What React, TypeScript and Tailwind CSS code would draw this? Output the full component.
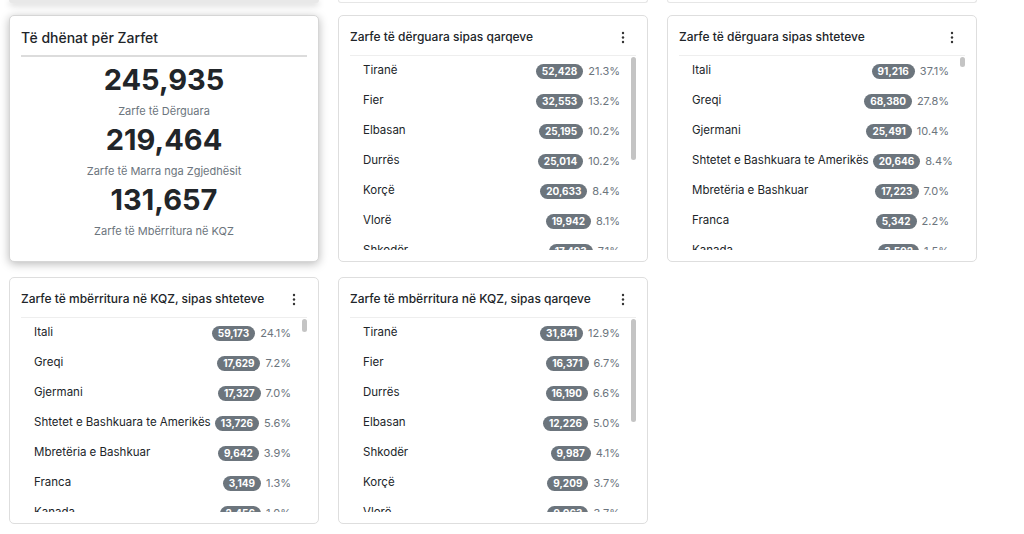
import React from "react";

type Row = { name: string; count: string; pct: string };

const qarqeDerguara: Row[] = [
  { name: "Tiranë", count: "52,428", pct: "21.3%" },
  { name: "Fier", count: "32,553", pct: "13.2%" },
  { name: "Elbasan", count: "25,195", pct: "10.2%" },
  { name: "Durrës", count: "25,014", pct: "10.2%" },
  { name: "Korçë", count: "20,633", pct: "8.4%" },
  { name: "Vlorë", count: "19,942", pct: "8.1%" },
  { name: "Shkodër", count: "17,493", pct: "7.1%" },
  { name: "Berat", count: "14,210", pct: "5.8%" },
];

const shtetDerguara: Row[] = [
  { name: "Itali", count: "91,216", pct: "37.1%" },
  { name: "Greqi", count: "68,380", pct: "27.8%" },
  { name: "Gjermani", count: "25,491", pct: "10.4%" },
  { name: "Shtetet e Bashkuara te Amerikës", count: "20,646", pct: "8.4%" },
  { name: "Mbretëria e Bashkuar", count: "17,223", pct: "7.0%" },
  { name: "Franca", count: "5,342", pct: "2.2%" },
  { name: "Kanada", count: "3,592", pct: "1.5%" },
  { name: "Belgjika", count: "2,104", pct: "0.9%" },
];

const shtetKqz: Row[] = [
  { name: "Itali", count: "59,173", pct: "24.1%" },
  { name: "Greqi", count: "17,629", pct: "7.2%" },
  { name: "Gjermani", count: "17,327", pct: "7.0%" },
  { name: "Shtetet e Bashkuara te Amerikës", count: "13,726", pct: "5.6%" },
  { name: "Mbretëria e Bashkuar", count: "9,642", pct: "3.9%" },
  { name: "Franca", count: "3,149", pct: "1.3%" },
  { name: "Kanada", count: "2,456", pct: "1.0%" },
  { name: "Belgjika", count: "1,402", pct: "0.6%" },
];

const qarqeKqz: Row[] = [
  { name: "Tiranë", count: "31,841", pct: "12.9%" },
  { name: "Fier", count: "16,371", pct: "6.7%" },
  { name: "Durrës", count: "16,190", pct: "6.6%" },
  { name: "Elbasan", count: "12,226", pct: "5.0%" },
  { name: "Shkodër", count: "9,987", pct: "4.1%" },
  { name: "Korçë", count: "9,209", pct: "3.7%" },
  { name: "Vlorë", count: "9,063", pct: "3.7%" },
  { name: "Berat", count: "7,118", pct: "2.9%" },
];

function Kebab() {
  return (
    <svg width="4" height="13" viewBox="0 0 4 13" className="text-[#333]">
      <circle cx="2" cy="2" r="1.2" fill="currentColor" />
      <circle cx="2" cy="6.5" r="1.2" fill="currentColor" />
      <circle cx="2" cy="11" r="1.2" fill="currentColor" />
    </svg>
  );
}

function ListCard({ title, rows, thumb }: { title: string; rows: Row[]; thumb: number }) {
  return (
    <div className="w-[310px] h-[247px] bg-white border border-[#dedede] rounded-[5px] px-[11px] pt-[11px] flex flex-col">
      <div className="flex items-center justify-between h-[20px] pr-[11px]">
        <span className="text-[12px] font-medium text-[#212529] whitespace-nowrap">{title}</span>
        <Kebab />
      </div>
      <div className="mt-[8px] border-t border-[#eeeeee]" />
      <div className="flex h-[194px]">
        <div className="flex-1 overflow-hidden">
          {rows.map((r) => (
            <div key={r.name} className="h-[30px] flex items-center pl-[13px] pr-[11px]">
              <span className="flex-1 text-[11.5px] text-[#212529] whitespace-nowrap">{r.name}</span>
              <span className="ml-[4px] bg-[#6c757d] text-white text-[10px] font-bold rounded-full px-[6px] h-[15px] leading-[15px]">
                {r.count}
              </span>
              <span className="ml-[5px] text-[11px] text-[#6c757d]">{r.pct}</span>
            </div>
          ))}
        </div>
        <div className="w-[5px] pt-[1px]">
          <div className="w-[5px] rounded-full bg-[#c4c4c4]" style={{ height: thumb }} />
        </div>
      </div>
    </div>
  );
}

function Stat({ value, label }: { value: string; label: string }) {
  return (
    <div className="flex flex-col items-center">
      <div className="text-[29px] leading-[36px] font-bold text-[#212529]">{value}</div>
      <div className="mt-[5px] text-[11px] leading-[16px] text-[#6c757d]">{label}</div>
    </div>
  );
}

export default function App() {
  return (
    <div
      className="w-[1024px] h-[534px] overflow-hidden bg-white pl-[9px]"
      style={{ fontFamily: "Inter, 'Noto Sans', sans-serif" }}
    >
      <div className="flex gap-[19px] h-[3px]">
        <div className="w-[310px] h-[3px] bg-[#e8e8e8] rounded-b-[5px] shadow-[0_2px_6px_rgba(0,0,0,0.25)]" />
        <div className="w-[310px] h-[3px] bg-white border border-t-0 border-[#e6e6e6] rounded-b-[5px]" />
        <div className="w-[310px] h-[3px] bg-white border border-t-0 border-[#e6e6e6] rounded-b-[5px]" />
      </div>
      <div className="flex gap-[19px] mt-[12px]">
        <div className="w-[310px] h-[247px] bg-white border border-[#d6d6d6] rounded-[5px] shadow-[0_2px_10px_rgba(0,0,0,0.28)] px-[11px] pt-[11px]">
          <div className="h-[20px] flex items-center text-[14px] font-medium text-[#212529]">Të dhënat për Zarfet</div>
          <div className="mt-[8px] border-t-2 border-[#dcdcdc]" />
          <div className="mt-[5px] flex flex-col gap-[3px]">
            <Stat value="245,935" label="Zarfe të Dërguara" />
            <Stat value="219,464" label="Zarfe të Marra nga Zgjedhësit" />
            <Stat value="131,657" label="Zarfe të Mbërritura në KQZ" />
          </div>
        </div>
        <ListCard title="Zarfe të dërguara sipas qarqeve" rows={qarqeDerguara} thumb={103} />
        <ListCard title="Zarfe të dërguara sipas shteteve" rows={shtetDerguara} thumb={10} />
      </div>
      <div className="flex gap-[19px] mt-[15px]">
        <ListCard title="Zarfe të mbërritura në KQZ, sipas shteteve" rows={shtetKqz} thumb={13} />
        <ListCard title="Zarfe të mbërritura në KQZ, sipas qarqeve" rows={qarqeKqz} thumb={103} />
      </div>
    </div>
  );
}
